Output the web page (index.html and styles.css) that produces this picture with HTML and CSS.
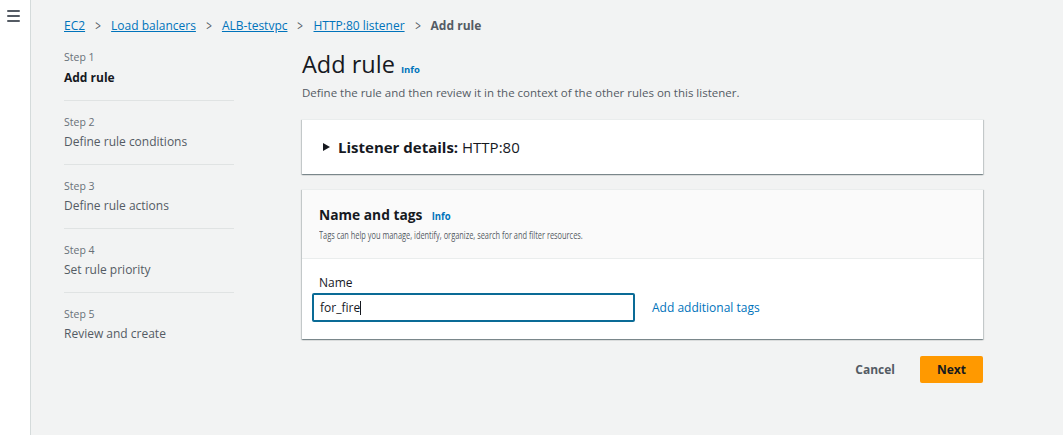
FILE: index.html
```html
<!DOCTYPE html>
<html>
<head>
<meta charset="utf-8">
<link rel="stylesheet" href="styles.css">
</head>
<body>
<div class="app">
  <aside class="rail">
    <div class="burger"><span></span><span></span><span></span></div>
  </aside>
  <div class="main">
    <nav class="crumbs">
      <a href="#">EC2</a><span class="sep">&gt;</span>
      <a href="#">Load balancers</a><span class="sep">&gt;</span>
      <a href="#">ALB-testvpc</a><span class="sep">&gt;</span>
      <a href="#">HTTP:80 listener</a><span class="sep">&gt;</span>
      <span class="current">Add rule</span>
    </nav>
    <div class="layout">
      <ol class="steps">
        <li class="step active"><div class="step-num">Step 1</div><div class="step-name">Add rule</div></li>
        <li class="step"><div class="step-num">Step 2</div><div class="step-name">Define rule conditions</div></li>
        <li class="step"><div class="step-num">Step 3</div><div class="step-name">Define rule actions</div></li>
        <li class="step"><div class="step-num">Step 4</div><div class="step-name">Set rule priority</div></li>
        <li class="step last"><div class="step-num">Step 5</div><div class="step-name">Review and create</div></li>
      </ol>
      <section class="content">
        <h1 class="title">Add rule <a class="info big" href="#">Info</a></h1>
        <p class="lead">Define the rule and then review it in the context of the other rules on this listener.</p>
        <div class="card listener">
          <span class="caret"></span><b>Listener details:</b>&nbsp;HTTP:80
        </div>
        <div class="card tags">
          <div class="card-head">
            <h2>Name and tags <a class="info" href="#">Info</a></h2>
            <p>Tags can help you manage, identify, organize, search for and filter resources.</p>
          </div>
          <div class="card-body">
            <label class="lbl">Name</label>
            <div class="row">
              <div class="input">for_fire<span class="cursor"></span></div>
              <a class="add" href="#">Add additional tags</a>
            </div>
          </div>
        </div>
        <div class="actions">
          <button class="btn link">Cancel</button>
          <button class="btn primary">Next</button>
        </div>
      </section>
    </div>
  </div>
</div>
</body>
</html>
```

FILE: styles.css
```css
* { box-sizing: border-box; }
html, body { margin: 0; padding: 0; }
body {
  font-family: "Open Sans", "Noto Sans", Arial, sans-serif;
  color: #16191f;
  background: #f2f3f3;
  width: 1063px;
  height: 435px;
  overflow: hidden;
}
.app { display: flex; height: 435px; }
.rail {
  width: 31px;
  flex: none;
  background: #fff;
  border-right: 1px solid #d5dbdb;
  padding: 10px 0 0 7px;
}
.burger { display: flex; flex-direction: column; gap: 3px; width: 13px; }
.burger span { display: block; height: 2px; background: #545b64; border-radius: 1px; }
.main { flex: 1; padding: 15px 0 0 33px; }
.crumbs {
  display: flex;
  align-items: center;
  font-size: 12px;
  height: 20px;
}
.crumbs a { color: #0073bb; text-decoration: underline; }
.crumbs .sep { color: #545b64; margin: 0 9px; font-size: 14px; transform: scaleX(0.7); display: inline-block; }
.crumbs .current { color: #545b64; font-weight: 700; }
.layout { display: flex; margin-top: 14px; }
.steps {
  list-style: none;
  margin: 0;
  padding: 0;
  width: 170px;
  flex: none;
}
.step { border-bottom: 1px solid #e0e3e3; padding: 13px 0 13px; }
.step:first-child { padding-top: 0; }
.step.last { border-bottom: none; }
.step-num { font-size: 10.5px; color: #687078; line-height: 16px; }
.step-name { font-size: 12px; color: #545b64; line-height: 18px; margin-top: 3px; }
.step.active .step-name { font-weight: 700; color: #16191f; margin-top: 4px; }
.content { margin-left: 68px; width: 681px; }
.title {
  font-size: 23.5px;
  font-weight: 400;
  margin: 1px 0 0;
  line-height: 28px;
}
.info { color: #0073bb; font-size: 9.5px; font-weight: 700; text-decoration: none; letter-spacing: 0; }
.info.big { font-size: 9.5px; margin-left: 0; }
.lead { font-size: 11.5px; color: #545b64; margin: 1px 0 0; line-height: 16px; }
.card {
  background: #fff;
  box-shadow: 0 1px 1px 0 rgba(0,28,36,0.3), 1px 1px 1px 0 rgba(0,28,36,0.15), -1px 1px 1px 0 rgba(0,28,36,0.15);
  border-top: 1px solid #eaeded;
}
.listener {
  margin-top: 18px;
  height: 55px;
  display: flex;
  align-items: center;
  padding-left: 21px;
  font-size: 15px;
}
.caret {
  width: 0; height: 0;
  border-left: 7px solid #16191f;
  border-top: 4.5px solid transparent;
  border-bottom: 4.5px solid transparent;
  margin-right: 8px;
}
.listener b { font-weight: 700; }
.tags { margin-top: 15px; }
.card-head {
  background: #fafafa;
  border-bottom: 1px solid #eaeded;
  padding: 15px 17px 12px;
  height: 69px;
}
.card-head h2 { margin: 0; font-size: 14.5px; font-weight: 700; line-height: 20px; transform: scaleX(0.95); transform-origin: left; }
.card-head .info { font-size: 10px; margin-left: 6px; }
.card-head p { margin: 2px 0 0; font-size: 10px; color: #545b64; line-height: 14px; transform: scaleX(0.74); transform-origin: left; white-space: nowrap; }
.card-body { padding: 16px 10px 17px 10px; }
.lbl { display: block; font-size: 12px; color: #16191f; margin-left: 7px; line-height: 16px; }
.row { display: flex; align-items: center; margin-top: 2px; }
.input {
  width: 323px;
  height: 29px;
  border: 2px solid #0a6b96;
  border-radius: 2px;
  padding: 0 6px;
  font-size: 12px;
  display: flex;
  align-items: center;
}
.cursor { display: inline-block; width: 1px; height: 14px; background: #16191f; }
.add { color: #0073bb; font-size: 12px; text-decoration: none; margin-left: 17px; }
.actions { display: flex; justify-content: flex-end; align-items: center; margin-top: 16px; gap: 11px; }
.btn { font-family: inherit; font-size: 12px; font-weight: 700; border: none; cursor: pointer; }
.btn.link { background: transparent; color: #545b64; padding: 6px 14px; }
.btn.primary { background: #ff9900; color: #16191f; width: 63px; height: 27px; border-radius: 2px; }
```
